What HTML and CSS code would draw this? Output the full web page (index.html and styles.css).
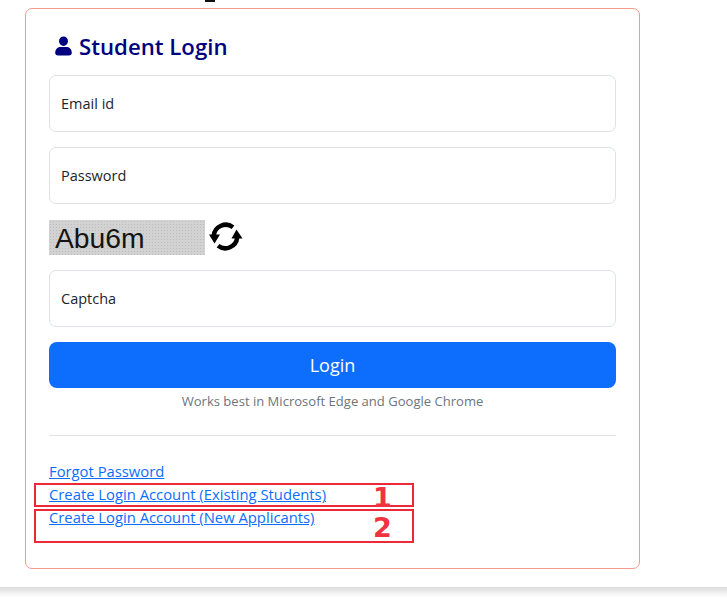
FILE: index.html
```html
<!DOCTYPE html>
<html lang="en">
<head>
<meta charset="utf-8">
<title>Student Login</title>
<link rel="stylesheet" href="styles.css">
</head>
<body>
<div class="top-mark"></div>
<main class="card">
  <h1 class="title">
    <svg class="user-icon" viewBox="0 0 16 18" aria-hidden="true"><path d="M8 9a4.200 4.500 0 1 0 0-9 4.200 4.500 0 0 0 0 9zM3 18c-1.800 0-2.800-1-2.800-2.600C.2 12.500 2.200 10 5 10h6c2.800 0 4.800 2.500 4.800 5.400 0 1.600-1 2.600-2.800 2.600z"/></svg>
    Student Login
  </h1>
  <div class="field">Email id</div>
  <div class="field">Password</div>
  <div class="captcha-row">
    <div class="captcha">Abu6m</div>
    <svg class="refresh" viewBox="0 0 32 32" aria-hidden="true">
      <path class="arc" d="M23 6.200A12 12 0 0 0 3.800 14.500"/>
      <path class="arc" d="M8 24.800A12 12 0 0 0 27.200 16.500"/>
      <path d="M-1 13.500h11L4.500 22.500z"/>
      <path d="M21.500 17.500h11L26.500 8.500z"/>
    </svg>
  </div>
  <div class="field">Captcha</div>
  <button class="login" type="button">Login</button>
  <p class="hint">Works best in Microsoft Edge and Google Chrome</p>
  <hr class="rule">
  <nav class="links">
    <a href="#">Forgot Password</a>
    <a href="#">Create Login Account (Existing Students)</a>
    <a href="#">Create Login Account (New Applicants)</a>
  </nav>
</main>
<div class="mark mark-one"><span>1</span></div>
<div class="mark mark-two"><span>2</span></div>
<div class="page-edge"></div>
</body>
</html>
```
FILE: styles.css
```css
* { box-sizing: border-box; }
html, body { height: 100%; }
body {
  margin: 0;
  position: relative;
  overflow: hidden;
  background: #fff;
  font-family: "Open Sans", "Noto Sans", sans-serif;
  color: #212529;
}
.top-mark {
  position: absolute;
  left: 205px;
  top: 0;
  width: 10px;
  height: 2px;
  background: #111;
}
.card {
  width: 615px;
  height: 561px;
  margin: 8px 0 0 25px;
  padding: 21px 23px 0;
  border: 1px solid #f4998d;
  border-radius: 7px;
}
.title {
  display: flex;
  align-items: center;
  gap: 7px;
  height: 32px;
  margin: 0 0 13px 6px;
  font-size: 22.200px;
  font-weight: 600;
  color: #000080;
}
.user-icon { width: 17px; height: 20px; fill: #000080; }
.field {
  display: flex;
  align-items: center;
  height: 57px;
  margin-bottom: 15px;
  padding: 1px 11px 0;
  border: 1px solid #dee2e6;
  border-radius: 7px;
  font-size: 14.500px;
  line-height: 20px;
}
.captcha-row {
  display: flex;
  align-items: center;
  gap: 5px;
  height: 36px;
  margin-bottom: 15px;
}
.captcha {
  width: 156px;
  height: 35px;
  padding-left: 6px;
  background-color: #d2d2d2;
  background-image: radial-gradient(#bdbdbd 0.6px, transparent 0.8px);
  background-size: 3px 3px;
  font: 28.300px/36px "Liberation Sans", sans-serif;
  color: #141414;
}
.refresh { width: 32px; height: 32px; overflow: visible; }
.arc { fill: none; stroke: #000; stroke-width: 4.500px; }
.login {
  display: block;
  width: 100%;
  height: 46px;
  padding: 0;
  border: 0;
  border-radius: 8px;
  background: #0d6efd;
  color: #fff;
  font: 18px "Open Sans", "Noto Sans", sans-serif;
}
.hint {
  margin: 4px 0 0;
  height: 19px;
  font-size: 13.050px;
  line-height: 19px;
  text-align: center;
  color: #6c757d;
}
.rule {
  height: 1px;
  margin: 24px 0 24px;
  border: 0;
  background: #e3e3e3;
}
.links { display: flex; flex-direction: column; align-items: flex-start; }
.links a {
  height: 23px;
  font-size: 14.800px;
  line-height: 23px;
  color: #0d6efd;
}
.mark {
  position: absolute;
  left: 34px;
  width: 380px;
  border: 2px solid #ed2939;
}
.mark span {
  position: absolute;
  left: 337px;
  font: 700 27px/1 "DejaVu Sans", sans-serif;
  color: #ef3340;
}
.mark-one { top: 483px; height: 24px; }
.mark-one span { top: -1px; }
.mark-two { top: 509px; height: 34px; }
.mark-two span { top: 3px; }
.page-edge {
  position: absolute;
  left: 0;
  right: 0;
  bottom: 0;
  height: 11px;
  background: linear-gradient(#dcdcdc, #f4f4f4 60%, #fff);
}
```
